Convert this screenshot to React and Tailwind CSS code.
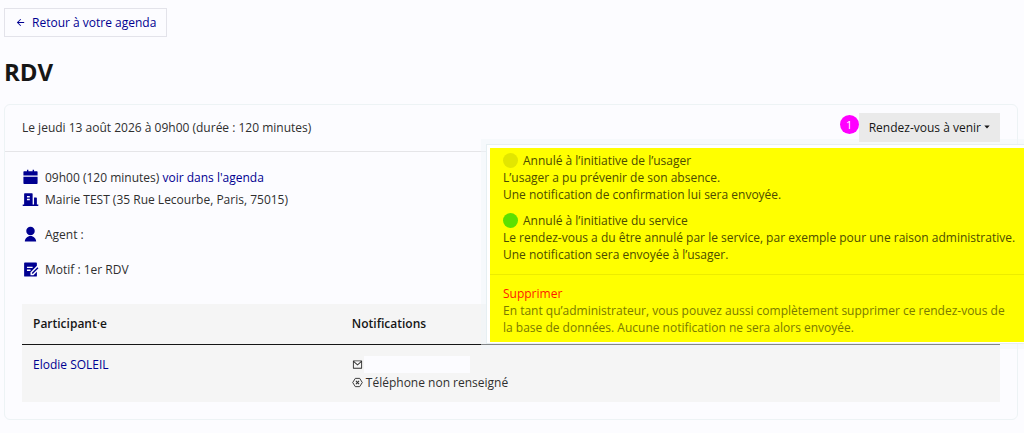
import {
  RiArrowLeftLine,
  RiBuildingFill,
  RiCalendarFill,
  RiDraftFill,
  RiMailLine,
  RiUserFill,
} from "react-icons/ri";

const participants = [
  { name: "Elodie SOLEIL", email: "", phone: "Téléphone non renseigné" },
];

const statusOptions = [
  {
    title: "Annulé à l’initiative de l’usager",
    dot: "bg-[#e2e600]",
    lines: [
      "L’usager a pu prévenir de son absence.",
      "Une notification de confirmation lui sera envoyée.",
    ],
  },
  {
    title: "Annulé à l’initiative du service",
    dot: "bg-[#5ce000]",
    lines: [
      "Le rendez-vous a du être annulé par le service, par exemple pour une raison administrative.",
      "Une notification sera envoyée à l’usager.",
    ],
  },
];

export default function App() {
  return (
    <div className="min-h-screen overflow-hidden bg-[#fcfcff] pt-2 pr-[6px] pb-3 pl-1 font-['Open_Sans','Noto_Sans',sans-serif] text-[12px] leading-[17px] text-[#2f2f2f]">
      <a
        href="#agenda"
        className="inline-flex h-[29px] items-center gap-[6px] border border-[#e3e3ea] px-[10px] font-medium text-[#000091]"
      >
        <RiArrowLeftLine className="size-[11px]" />
        Retour à votre agenda
      </a>

      <h1 className="mt-5 text-[24px] leading-[30px] font-bold text-[#161616]">RDV</h1>

      <main className="mt-[17px] rounded-md border border-[#edf3f5]">
        <div className="flex h-[47px] items-center justify-between border-b border-[#e5e5e8] px-[17px] pb-[2px]">
          <p>Le jeudi 13 août 2026 à 09h00 (durée : 120 minutes)</p>
          <StatusMenu />
        </div>

        <div className="px-[17px] pt-[17px] pb-[17px]">
          <div className="space-y-[5px]">
            <InfoRow icon={<RiCalendarFill />}>
              09h00 (120 minutes){" "}
              <a href="#agenda" className="text-[#000091]">
                voir dans l'agenda
              </a>
            </InfoRow>
            <InfoRow icon={<RiBuildingFill />}>
              Mairie TEST (35 Rue Lecourbe, Paris, 75015)
            </InfoRow>
          </div>
          <div className="mt-[18px] space-y-[18px]">
            <InfoRow icon={<RiUserFill />}>Agent :</InfoRow>
            <InfoRow icon={<RiDraftFill />}>Motif : 1er RDV</InfoRow>
          </div>

          <ParticipantsTable />
        </div>
      </main>
    </div>
  );
}

function InfoRow({ icon, children }) {
  return (
    <div className="flex items-center gap-[6px]">
      <span className="text-[17px] text-[#000091]">{icon}</span>
      <p>{children}</p>
    </div>
  );
}

function StatusMenu() {
  return (
    <div className="relative flex items-center">
      <span className="absolute -left-[19px] top-[2px] z-20 flex size-[19px] items-center justify-center rounded-full bg-[#ff00ff] text-[11px] text-white">
        1
      </span>
      <button
        type="button"
        aria-expanded="true"
        className="relative z-20 flex h-[29px] items-center gap-[3px] bg-[#eaeaea] px-[10px] font-medium text-[#161616]"
      >
        Rendez-vous à venir
        <svg viewBox="0 0 6 4" className="h-1 w-[6px]" fill="currentColor">
          <path d="M0.3 0.4h5.4L3 3.4z" />
        </svg>
      </button>

      <div className="absolute top-[31px] -right-[27px] z-10 w-[541px] border border-[#e6eff2] bg-white pt-[3px] pr-[2px] pb-px pl-[3px] shadow-[0_0_0_5px_rgba(240,246,249,0.5)]">
        <div className="bg-[#ffff00] pt-1 pb-[6px] text-[#4c4c00]">
          {statusOptions.map((option) => (
            <button
              key={option.title}
              type="button"
              className="mb-[9px] block w-full px-[13px] text-left"
            >
              <span className="flex items-center gap-[5px]">
                <span className={`size-[15px] rounded-full ${option.dot}`} />
                {option.title}
              </span>
              {option.lines.map((line) => (
                <span key={line} className="block whitespace-nowrap">
                  {line}
                </span>
              ))}
            </button>
          ))}
          <hr className="mt-[11px] border-[#ecec00]" />
          <button type="button" className="mt-[10px] block w-full px-[13px] text-left text-[#7a7a00]">
            <span className="block text-[#ff1a00]">Supprimer</span>
            <span className="block">
              En tant qu’administrateur, vous pouvez aussi complètement supprimer ce rendez-vous de
              la base de données. Aucune notification ne sera alors envoyée.
            </span>
          </button>
        </div>
      </div>
    </div>
  );
}

function ParticipantsTable() {
  return (
    <table className="mt-[26px] w-full table-fixed bg-[#f5f5f5] text-left">
      <thead>
        <tr className="border-b border-[#161616] text-[#161616]">
          <th className="h-10 w-[32.6%] px-[11px] font-semibold">Participant·e</th>
          <th className="h-10 px-[11px] font-semibold">Notifications</th>
        </tr>
      </thead>
      <tbody>
        {participants.map((participant) => (
          <tr key={participant.name}>
            <td className="px-[11px] py-[11px] align-top">
              <a href="#participant" className="text-[#000091]">
                {participant.name}
              </a>
            </td>
            <td className="px-[11px] py-[11px] align-top">
              <div className="flex items-center gap-px">
                <RiMailLine className="size-[11px]" />
                <span className="h-[17px] w-[106px] bg-[#fcfcff]">{participant.email}</span>
              </div>
              <div className="mt-px flex items-center gap-[3px]">
                <HexCloseIcon />
                {participant.phone}
              </div>
            </td>
          </tr>
        ))}
      </tbody>
    </table>
  );
}

function HexCloseIcon() {
  return (
    <svg viewBox="0 0 24 24" className="size-[11px]" fill="none" stroke="currentColor" strokeWidth="2">
      <path d="M7.2 3h9.6L22.4 12l-5.6 9H7.2L1.6 12z" strokeLinejoin="round" />
      <path d="M8.6 8.6l6.8 6.8M15.4 8.6l-6.8 6.8" strokeWidth="2.4" />
    </svg>
  );
}
